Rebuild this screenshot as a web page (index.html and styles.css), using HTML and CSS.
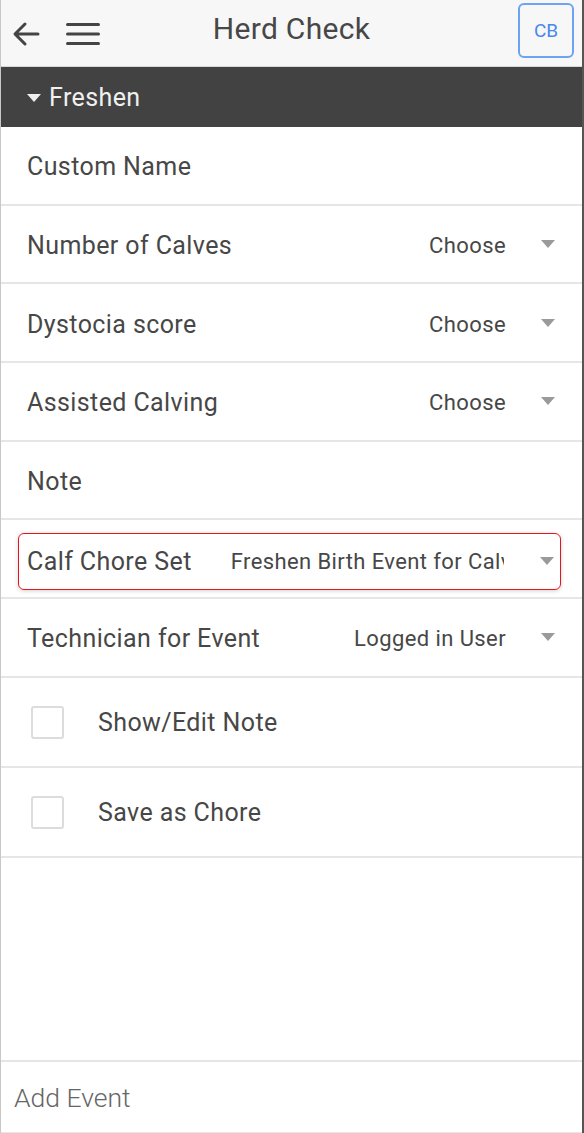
FILE: index.html
```html
<!DOCTYPE html>
<html>
<head>
<meta charset="utf-8">
<link rel="stylesheet" href="styles.css">
</head>
<body>
<div class="app">
  <header class="topbar">
    <div class="left-icons">
      <svg class="back" width="28" height="28" viewBox="0 0 28 28"><path d="M26 14H4M13 4L3 14l10 10" fill="none" stroke="#444" stroke-width="3" stroke-linecap="round" stroke-linejoin="round"/></svg>
      <svg class="menu" width="34" height="24" viewBox="0 0 34 24"><path d="M1.5 2.5h31M1.5 12h31M1.5 21.5h31" stroke="#444" stroke-width="3" stroke-linecap="round"/></svg>
    </div>
    <div class="title">Herd Check</div>
    <div class="avatar">CB</div>
  </header>
  <div class="section-bar"><span class="caret"></span>Freshen</div>
  <div class="list">
    <div class="row"><span class="label">Custom Name</span></div>
    <div class="row"><span class="label">Number of Calves</span><span class="value">Choose</span><span class="tri"></span></div>
    <div class="row"><span class="label">Dystocia score</span><span class="value">Choose</span><span class="tri"></span></div>
    <div class="row"><span class="label">Assisted Calving</span><span class="value">Choose</span><span class="tri"></span></div>
    <div class="row"><span class="label">Note</span></div>
    <div class="row highlight-row">
      <div class="highlight">
        <span class="label">Calf Chore Set</span><span class="value clip">Freshen Birth Event for Calves</span><span class="tri"></span>
      </div>
    </div>
    <div class="row"><span class="label">Technician for Event</span><span class="value">Logged in User</span><span class="tri"></span></div>
    <div class="row check-row"><span class="box"></span><span class="label">Show/Edit Note</span></div>
    <div class="row check-row"><span class="box"></span><span class="label">Save as Chore</span></div>
  </div>
  <div class="spacer"></div>
  <footer class="footer">Add Event</footer>
</div>
</body>
</html>
```
FILE: styles.css
```css
* { box-sizing: border-box; }
html, body { margin: 0; padding: 0; height: 100%; }
body { background: #fff; font-family: Roboto, "Noto Sans", sans-serif; color: #444; }
.app {
  width: 584px; height: 1133px; display: flex; flex-direction: column;
  border-left: 1px solid #c8c8c8; border-right: 2px solid #555;
}
.topbar {
  height: 67px; background: #f7f7f7; border-bottom: 1px solid #d8d8d8;
  display: flex; align-items: center; position: relative; padding: 0 8px 0 11px;
}
.left-icons { display: flex; align-items: center; gap: 26px; }
.back { margin-top: 2px; }
.menu { margin-top: 1px; }
.title {
  position: absolute; left: 0; right: 0; text-align: center; top: 11px;
  font-size: 30px; letter-spacing: 0.3px; color: #474747; pointer-events: none;
}
.avatar {
  margin-left: auto; width: 56px; height: 55px; margin-top: -6px;
  border: 2px solid #6ea2f2; border-radius: 6px; color: #4a87ee;
  display: flex; align-items: center; justify-content: center; font-size: 19px;
}
.section-bar {
  height: 60px; background: #424242; color: #f0f0f0; font-size: 25px; letter-spacing: 0.4px;
  display: flex; align-items: center; padding-left: 26px;
}
.caret {
  width: 0; height: 0; border-left: 7px solid transparent; border-right: 7px solid transparent;
  border-top: 8px solid #f0f0f0; margin-right: 8px; margin-top: 1px;
}
.list { display: flex; flex-direction: column; }
.row {
  height: 78.7px; border-bottom: 2px solid #e6e6e6; display: flex; align-items: center;
  padding: 3px 27px 0 26px; font-size: 25px; letter-spacing: 0.4px;
}
.label { color: #474747; }
.value { margin-left: auto; font-size: 22px; letter-spacing: 0.4px; color: #474747; margin-right: 35px; }
.tri {
  flex: none; width: 0; height: 0; border-left: 7px solid transparent; border-right: 7px solid transparent;
  border-top: 8px solid #9a9a9a; margin-top: -3px;
}
.highlight-row { padding: 0 21px 0 17px; }
.highlight {
  flex: 1; height: 57px; border: 1.5px solid #e8141c; border-radius: 6px;
  box-shadow: 0 1px 4px rgba(0,0,0,0.18);
  display: flex; align-items: center; padding: 0 6px 0 8px; margin-top: 6px;
}
.highlight .tri { margin-top: -2px; }
.value.clip {
  flex: 1; margin-left: 39px; white-space: nowrap; overflow: hidden; margin-right: 36px;
}
.check-row { height: 90px; padding-left: 30px; padding-top: 1px; }
.box {
  width: 33px; height: 33px; border: 2px solid #dcdcdc; border-radius: 3px; margin-right: 34px;
}
.spacer { flex: 1; border-bottom: 2px solid #e6e6e6; }
.footer {
  height: 71px; display: flex; align-items: center; padding-left: 13px;
  font-size: 26.5px; color: #666; font-weight: 300; border-bottom: 1px solid #e6e6e6;
}
```
